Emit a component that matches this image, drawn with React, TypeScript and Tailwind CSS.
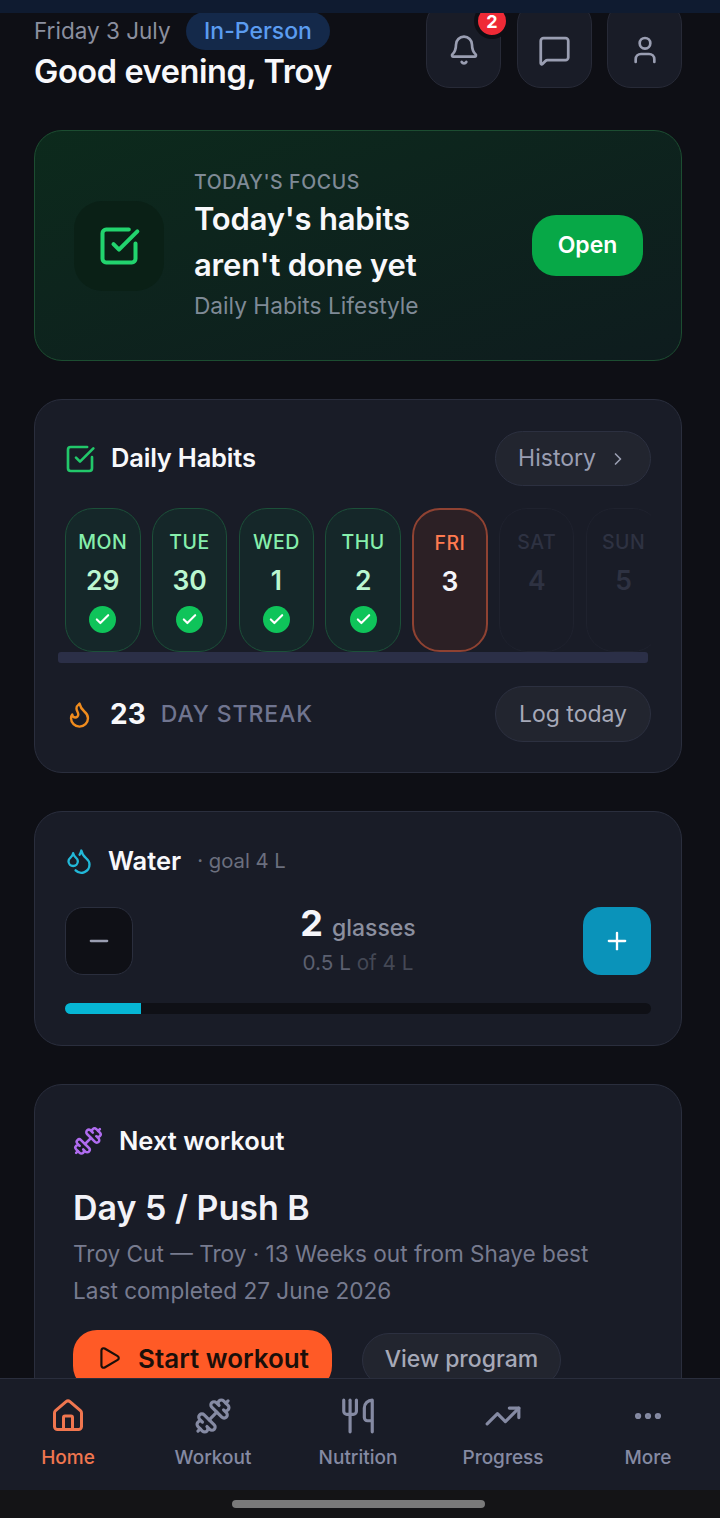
import React from "react";
import { Bell, MessageSquare, User, SquareCheckBig, Flame, Droplets, Dumbbell, Play, House, Utensils, TrendingUp, Ellipsis, ChevronRight, Minus, Plus, Check } from "lucide-react";

const days = [
  { d: "MON", n: "29", s: "done" },
  { d: "TUE", n: "30", s: "done" },
  { d: "WED", n: "1", s: "done" },
  { d: "THU", n: "2", s: "done" },
  { d: "FRI", n: "3", s: "today" },
  { d: "SAT", n: "4", s: "future" },
  { d: "SUN", n: "5", s: "future" },
];

function Day({ d, n, s }: { d: string; n: string; s: string }) {
  const box =
    s === "done"
      ? "border border-[#1c5039] bg-[#152729]"
      : s === "today"
      ? "border-2 border-[#8f4232] bg-[#2c2025]"
      : "border border-[#1f222e] bg-[#191c27]";
  const top = s === "done" ? "text-[#86efac]" : s === "today" ? "text-[#ff7a50]" : "text-[#2e3242]";
  const num = s === "done" ? "text-[#bbf7d0]" : s === "today" ? "text-[#f5f5fa]" : "text-[#2e3242]";
  return (
    <div className={`w-[75.5px] h-[144px] shrink-0 rounded-[28px] flex flex-col items-center pt-[20px] ${box}`}>
      <div className={`text-[19.5px] leading-[26px] font-medium tracking-[0.5px] ${top}`}>{d}</div>
      <div className={`text-[26.5px] leading-[32px] font-semibold mt-[9px] ${num}`}>{n}</div>
      {s === "done" && (
        <div className="w-[27px] h-[27px] mt-[10px] rounded-full bg-[#0fc45a] flex items-center justify-center">
          <Check size={17} strokeWidth={3} className="text-white" />
        </div>
      )}
    </div>
  );
}

function IconBtn({ children }: { children: React.ReactNode }) {
  return (
    <div className="relative w-[75px] h-[88px] rounded-[24px] bg-[#191c27] border border-[#272a37] flex items-center justify-center pt-[12px]">
      {children}
    </div>
  );
}

function NavItem({ icon, label, active }: { icon: React.ReactNode; label: string; active?: boolean }) {
  return (
    <div className={`w-[136px] flex flex-col items-center ${active ? "text-[#f0764f]" : "text-[#858aa3]"}`}>
      <div className="h-[38px] flex items-center justify-center">{icon}</div>
      <div className="text-[19px] leading-[26px] mt-[10px] font-medium">{label}</div>
    </div>
  );
}

export default function App() {
  return (
    <div className="w-[720px] h-[1518px] flex flex-col overflow-hidden bg-[#0e0f15] font-['Inter',sans-serif]">
      <div className="h-[13px] shrink-0 bg-[#0f1b30] relative z-10" />
      <main className="flex-1 min-h-0 overflow-hidden pl-[34px] pr-[38px]">
        <header className="flex justify-between -mt-[13px]">
          <div className="pt-[13px]">
            <div className="flex items-center gap-[15px] h-[36px]">
              <span className="text-[22.5px] leading-[34px] text-[#8b8f9f]">Friday 3 July</span>
              <span className="h-[38px] px-[18.5px] rounded-full bg-[#14294a] text-[#5b9cf0] text-[23px] leading-[38px] font-medium">In-Person</span>
            </div>
            <div className="text-[32.5px] leading-[44px] font-semibold text-[#f8f8fb] tracking-[-0.4px] mt-[1px]">Good evening, Troy</div>
          </div>
          <div className="flex gap-[15.5px]">
            <IconBtn>
              <Bell size={32} strokeWidth={2} className="text-[#9a9eb2]" />
              <div className="absolute left-[47px] top-[2px] w-[36px] h-[36px] rounded-full bg-[#ef2a36] border-[4px] border-[#0e0f15] flex items-center justify-center text-white text-[18px] font-bold">2</div>
            </IconBtn>
            <IconBtn>
              <MessageSquare size={33} strokeWidth={2} className="text-[#9a9eb2]" />
            </IconBtn>
            <IconBtn>
              <User size={32} strokeWidth={2} className="text-[#9a9eb2]" />
            </IconBtn>
          </div>
        </header>

        <section className="mt-[36px] h-[231px] rounded-[28px] border border-[#1c4d31] bg-gradient-to-br from-[#0c2a1c] to-[#0e1c1e] flex items-center pl-[39px] pr-[38px]">
          <div className="w-[90px] h-[90px] rounded-[28px] bg-[#0a2016] flex items-center justify-center shrink-0">
            <SquareCheckBig size={44} strokeWidth={2.2} className="text-[#22d46e]" />
          </div>
          <div className="ml-[30px] flex-1">
            <div className="text-[19.5px] leading-[26px] font-medium tracking-[0.6px] text-[#7f8a96]">TODAY'S FOCUS</div>
            <div className="text-[31px] leading-[46px] font-semibold text-[#f8f8fb] tracking-[-0.2px] mt-[1px]">Today's habits<br />aren't done yet</div>
            <div className="text-[22.7px] leading-[34px] text-[#7f8a96] mt-[1px]">Daily Habits Lifestyle</div>
          </div>
          <div className="w-[111px] h-[61px] rounded-[24px] bg-[#07a847] text-white text-[23px] font-semibold flex items-center justify-center">Open</div>
        </section>

        <section className="mt-[38px] h-[374px] rounded-[28px] border border-[#2a2e3d] bg-[#191c27] pt-[31px] pl-[30px] pr-[30px]">
          <div className="flex items-center justify-between h-[55px]">
            <div className="flex items-center">
              <SquareCheckBig size={32} strokeWidth={2} className="text-[#22c76a] -ml-[1px]" />
              <span className="ml-[15px] text-[25.5px] font-semibold text-[#f8f8fb] tracking-[-0.2px]">Daily Habits</span>
            </div>
            <div className="w-[156px] h-[55px] rounded-full bg-[#22252f] border border-[#2c3040] flex items-center justify-center gap-[12px] text-[#9a9eb2] text-[23px]">
              History <ChevronRight size={20} />
            </div>
          </div>
          <div className="mt-[22px]">
            <div className="flex gap-[11.3px] overflow-hidden h-[144px]">
              {days.map((x) => (
                <Day key={x.d} {...x} />
              ))}
            </div>
            <div className="h-[11px] -ml-[7px] mr-[3px] rounded-[3px] bg-[#2b2f47]" />
          </div>
          <div className="flex items-center justify-between mt-[23px]">
            <div className="flex items-center">
              <Flame size={29} strokeWidth={2} className="text-[#f08c1e]" />
              <span className="ml-[16px] text-[28px] font-bold text-[#f8f8fb]">23</span>
              <span className="ml-[15px] text-[23px] font-medium tracking-[0.9px] text-[#707590]">DAY STREAK</span>
            </div>
            <div className="w-[156px] h-[56px] rounded-full bg-[#22252f] border border-[#2c3040] flex items-center justify-center text-[#a6a9b8] text-[23px]">Log today</div>
          </div>
        </section>

        <section className="mt-[38px] h-[235px] rounded-[28px] border border-[#2a2e3d] bg-[#191c27] pt-[30px] px-[30px]">
          <div className="flex items-center h-[38px]">
            <Droplets size={28} strokeWidth={2} className="text-[#22b8d8]" />
            <span className="ml-[15px] text-[25.5px] font-semibold text-[#f8f8fb]">Water</span>
            <span className="ml-[16px] text-[20.3px] text-[#6b6f7e]">· goal 4 L</span>
          </div>
          <div className="flex items-center justify-between mt-[27px] h-[68px]">
            <div className="w-[68px] h-[68px] rounded-[18px] bg-[#0f1016] border border-[#2a2e3d] flex items-center justify-center">
              <Minus size={28} strokeWidth={2} className="text-[#9a9eb2]" />
            </div>
            <div className="flex flex-col items-center">
              <div className="flex items-baseline gap-[9px] h-[36px]">
                <span className="text-[36px] leading-[36px] font-bold text-[#f5f5fa]">2</span>
                <span className="text-[23px] leading-[36px] font-medium text-[#8b8f9f]">glasses</span>
              </div>
              <div className="text-[20.7px] leading-[28px] text-[#5c6070] mt-[8px]">0.5 L <span className="text-[#444855]">of 4 L</span></div>
            </div>
            <div className="w-[68px] h-[68px] rounded-[18px] bg-[#0a93ba] flex items-center justify-center">
              <Plus size={28} strokeWidth={2} className="text-white" />
            </div>
          </div>
          <div className="mt-[28px] h-[11px] rounded-full bg-[#0f1016] overflow-hidden">
            <div className="h-full w-[13%] bg-[#06b6d4]" />
          </div>
        </section>

        <section className="mt-[38px] h-[340px] rounded-[28px] border border-[#2a2e3d] bg-[#191c27] pt-[40px] px-[38px]">
          <div className="flex items-center h-[32px]">
            <Dumbbell size={30} strokeWidth={2} className="text-[#b06cf0]" />
            <span className="ml-[16px] text-[25.5px] font-semibold text-[#f8f8fb]">Next workout</span>
          </div>
          <div className="text-[34px] leading-[46px] font-semibold text-[#f2f2f8] mt-[28px]">Day 5 / Push B</div>
          <div className="text-[22.6px] leading-[37px] text-[#777b8f] mt-[4px]">Troy Cut — Troy · 13 Weeks out from Shaye best</div>
          <div className="text-[22.6px] leading-[37px] text-[#777b8f]">Last completed 27 June 2026</div>
          <div className="flex items-center gap-[30px] mt-[21px]">
            <div className="w-[259px] h-[60px] rounded-[24px] bg-[#ff5a26] flex items-center justify-center gap-[16px] pb-[4px] text-[#1a0f0a] text-[26px] font-semibold">
              <Play size={26} strokeWidth={2} /> Start workout
            </div>
            <div className="w-[199px] h-[54px] rounded-full bg-[#22252f] border border-[#2c3040] flex items-center justify-center pb-[2px] text-[#a6a9b8] text-[23px] font-medium">View program</div>
          </div>
        </section>
      </main>

      <nav className="h-[112px] shrink-0 border-t border-[#2a2e3d] bg-[#191c27] flex justify-between pr-[4px] pt-[18px]">
        <NavItem active label="Home" icon={<House size={36} strokeWidth={2} />} />
        <NavItem label="Workout" icon={<Dumbbell size={38} strokeWidth={2} />} />
        <NavItem label="Nutrition" icon={<Utensils size={38} strokeWidth={2} />} />
        <NavItem label="Progress" icon={<TrendingUp size={38} strokeWidth={2} />} />
        <NavItem label="More" icon={<Ellipsis size={34} strokeWidth={2.4} />} />
      </nav>
      <div className="h-[28px] shrink-0 bg-[#141416] flex justify-center pt-[10px] pr-[4px]">
        <div className="w-[253px] h-[8px] rounded-full bg-[#7a7a7a]" />
      </div>
    </div>
  );
}
